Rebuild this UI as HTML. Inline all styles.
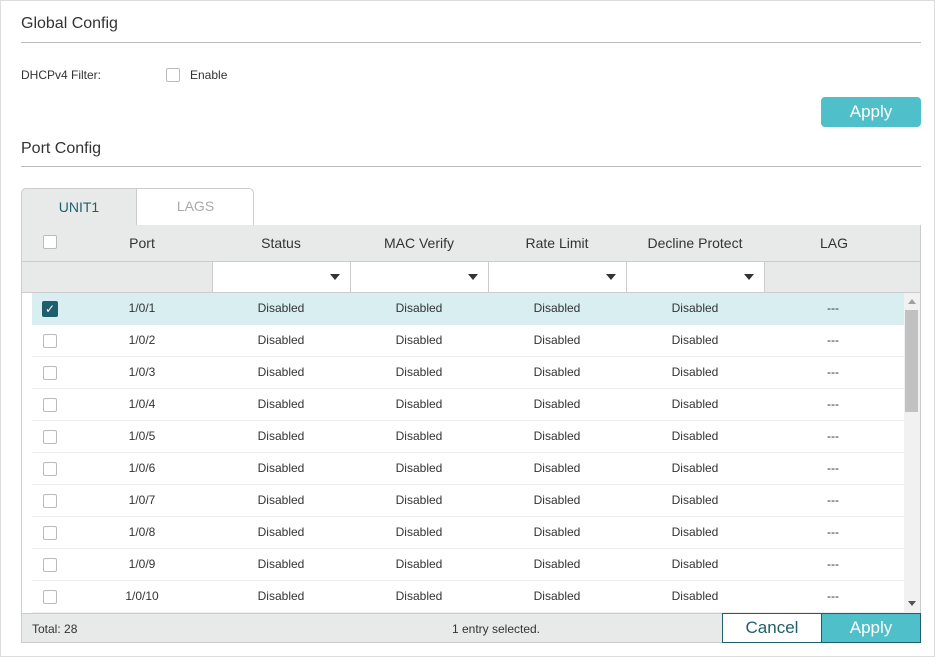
<!DOCTYPE html><html><head><style>
*{box-sizing:border-box;margin:0;padding:0}
body{width:935px;height:657px;background:#fff;font-family:"Liberation Sans",sans-serif;color:#333;position:relative;overflow:hidden}
.a{position:absolute}
.frame{left:0;top:0;width:935px;height:657px;border:1px solid #ddd}
.h{font-size:16px;color:#333}
.line{height:1px;background:#bbb}
.cb{width:14px;height:14px;border:1px solid #bbb;border-radius:2px;background:#fff}
.btn{background:#4fbfc9;color:#fff;font-size:17px;text-align:center;border-radius:4px}
.c{font-size:12px;text-align:center;color:#333}
.hd{font-size:14px;text-align:center;color:#333}
.sel{height:32px;border:1px solid #ccc;background:#fff;top:261px}
.tri{position:absolute;right:10px;top:12px;border-left:5px solid transparent;border-right:5px solid transparent;border-top:6px solid #333}
</style></head><body>
<div class="a frame"></div>
<div class="a h" style="left:21px;top:15px">Global Config</div>
<div class="a line" style="left:21px;top:42px;width:900px"></div>
<div class="a" style="left:21px;top:68px;font-size:12px">DHCPv4 Filter:</div>
<div class="a cb" style="left:166px;top:68px"></div>
<div class="a" style="left:190px;top:68px;font-size:12px">Enable</div>
<div class="a btn" style="left:821px;top:97px;width:100px;height:30px;line-height:30px">Apply</div>
<div class="a h" style="left:21px;top:140px">Port Config</div>
<div class="a line" style="left:21px;top:166px;width:900px"></div>
<!-- tabs -->
<div class="a" style="left:21px;top:188px;width:233px;height:37px;border:1px solid #ccc;border-bottom:none;border-radius:5px 5px 0 0;background:#fff"></div>
<div class="a" style="left:21px;top:188px;width:116px;height:38px;border:1px solid #ccc;border-bottom:none;border-right:1px solid #ccc;border-radius:5px 0 0 0;background:#e8eaea;color:#1f5f6b;font-size:14px;text-align:center;line-height:36px">UNIT1</div>
<div class="a" style="left:137px;top:188px;width:117px;height:37px;color:#aaa;font-size:14px;text-align:center;line-height:36px">LAGS</div>
<!-- table frame -->
<div class="a" style="left:21px;top:225px;width:900px;height:418px;border:1px solid #ccc;border-top:none"></div>
<div class="a" style="left:21px;top:225px;width:900px;height:68px;background:#e8eaea;border-left:1px solid #ccc;border-right:1px solid #ccc;border-bottom:1px solid #ccc"></div>
<div class="a" style="left:22px;top:261px;width:898px;height:1px;background:#ccc"></div>
<div class="a cb" style="left:43px;top:235px"></div>
<div class="a hd" style="left:82px;top:235px;width:120px">Port</div>
<div class="a hd" style="left:212px;top:235px;width:138px">Status</div>
<div class="a hd" style="left:350px;top:235px;width:138px">MAC Verify</div>
<div class="a hd" style="left:488px;top:235px;width:138px">Rate Limit</div>
<div class="a hd" style="left:626px;top:235px;width:138px">Decline Protect</div>
<div class="a hd" style="left:764px;top:235px;width:140px">LAG</div>
<div class="a sel" style="left:212px;width:139px"><i class="tri"></i></div>
<div class="a sel" style="left:350px;width:139px"><i class="tri"></i></div>
<div class="a sel" style="left:488px;width:139px"><i class="tri"></i></div>
<div class="a sel" style="left:626px;width:139px"><i class="tri"></i></div>
<div id="rows"></div>
<!-- scrollbar -->
<div class="a" style="left:904px;top:293px;width:16px;height:320px;background:#f1f1f1"></div>
<div class="a" style="left:905px;top:310px;width:13px;height:102px;background:#c1c1c1"></div>
<div class="a" style="left:908px;top:299px;border-left:4px solid transparent;border-right:4px solid transparent;border-bottom:5px solid #a0a0a0"></div>
<div class="a" style="left:908px;top:601px;border-left:4px solid transparent;border-right:4px solid transparent;border-top:5px solid #555"></div>
<!-- footer -->
<div class="a" style="left:21px;top:613px;width:900px;height:30px;background:#e8eaea;border:1px solid #ccc"></div>
<div class="a" style="left:32px;top:622px;font-size:12px">Total: 28</div>
<div class="a" style="left:380px;top:622px;width:232px;text-align:center;font-size:12px">1 entry selected.</div>
<div class="a" style="left:722px;top:613px;width:100px;height:30px;border:1px solid #1f5f6b;background:#fff;color:#1f5f6b;font-size:17px;text-align:center;line-height:28px">Cancel</div>
<div class="a" style="left:821px;top:613px;width:100px;height:30px;border:1px solid #1f5f6b;background:#4fbfc9;color:#fff;font-size:17px;text-align:center;line-height:28px">Apply</div>
<script>
var h='';for(var i=0;i<10;i++){var y=293+i*32;var sel=i==0;
h+='<div class="a" style="left:32px;top:'+y+'px;width:872px;height:32px;'+(sel?'background:#d8eef0;':'border-bottom:1px solid #eee;')+'"></div>';
h+=sel?'<div class="a" style="left:42px;top:'+(y+8)+'px;width:16px;height:16px;background:#1f5f6b;border-radius:2px;color:#fff;font-size:12px;text-align:center;line-height:16px">✓</div>':'<div class="a cb" style="left:43px;top:'+(y+9)+'px"></div>';
var t=y+8;h+='<div class="a c" style="left:82px;top:'+t+'px;width:120px">1/0/'+(i+1)+'</div>';
[212,350,488,626].forEach(function(x){h+='<div class="a c" style="left:'+x+'px;top:'+t+'px;width:138px">Disabled</div>'});
h+='<div class="a c" style="left:764px;top:'+t+'px;width:138px">---</div>';}
document.getElementById('rows').innerHTML=h;
</script>
</body></html>
